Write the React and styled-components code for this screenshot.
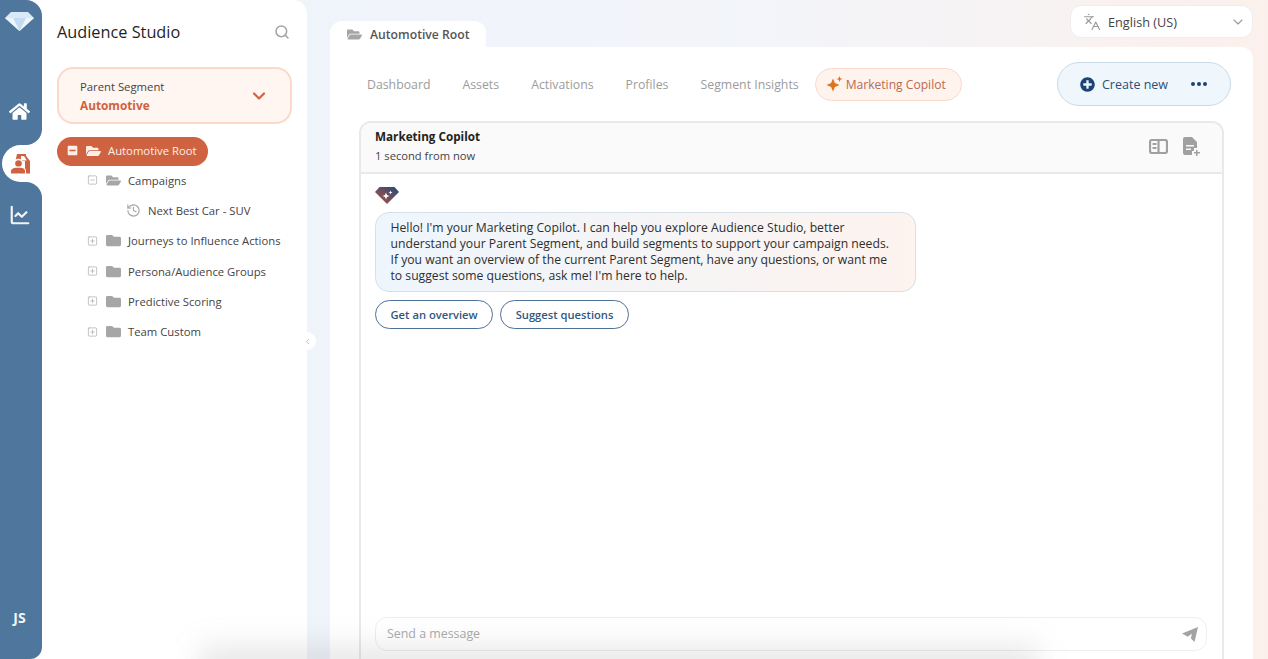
import React from 'react';
import styled, { createGlobalStyle } from 'styled-components';
import { FaFolder, FaFolderOpen, FaHome, FaMinusSquare, FaPlusCircle } from 'react-icons/fa';
import { ChevronDown, ChevronLeft, ChartLine, History, Languages, Search, SquareMinus, SquarePlus } from 'lucide-react';

const GlobalStyle = createGlobalStyle`
  html, body {
    margin: 0;
    height: 100%;
    overflow: hidden;
    background: #fff;
    font-family: "Open Sans", "Noto Sans", sans-serif;
  }
  #root { height: 100%; }
  * { box-sizing: border-box; }
`;

const Page = styled.div`
  position: relative;
  display: flex;
  height: 659px;
  overflow: hidden;
  background: linear-gradient(90deg, #edf2fb 0%, #f3f5fa 60%, #fbf0ec 100%);
`;

// left rail
const Rail = styled.nav`
  width: 42px;
  flex: none;
  display: flex;
  flex-direction: column;
  background: #fff;
`;

const RailTop = styled.div`
  height: 145px;
  background: #4f769c;
  border-radius: 0 16px 16px 0;
  display: flex;
  flex-direction: column;
  align-items: center;
  padding: 11px 3px 0 0;
  gap: 70px;
`;

const RailNotch = styled.div`
  height: 37px;
  background: #4f769c;
`;

const RailActive = styled.div`
  height: 100%;
  margin-left: 2px;
  padding-right: 4px;
  background: #fff;
  border-radius: 19px 0 0 19px;
  display: flex;
  align-items: center;
  justify-content: center;
  color: #cf6240;
`;

const RailBottom = styled.div`
  flex: 1;
  background: #4f769c;
  border-radius: 0 16px 12px 0;
  display: flex;
  flex-direction: column;
  align-items: center;
  justify-content: space-between;
  padding: 22px 3px 32px 0;
  color: #fff;
`;

const Initials = styled.span`
  font-size: 14px;
  font-weight: 700;
  color: #f3f6fa;
`;

// tree sidebar
const Sidebar = styled.aside`
  position: relative;
  width: 265px;
  flex: none;
  background: #fff;
  border-radius: 0 14px 0 0;
  padding: 21px 15px 0;
`;

const SideHead = styled.div`
  display: flex;
  align-items: center;
  justify-content: space-between;
  height: 22px;
  padding-right: 2px;
  color: #a5a5a5;
`;

const SideTitle = styled.h1`
  margin: 0;
  font-size: 16.3px;
  font-weight: 500;
  color: #1f1f1f;
`;

const SegmentBox = styled.div`
  display: flex;
  align-items: center;
  justify-content: space-between;
  height: 57px;
  margin-top: 24px;
  padding: 0 21px 0 21px;
  background: #fff5f1;
  border: 2px solid #fbd8ca;
  border-radius: 16px;
  color: #cf6240;
`;

const SegmentLabel = styled.div`
  font-size: 11.3px;
  line-height: 18px;
  color: #444;
`;

const SegmentValue = styled.div`
  font-size: 11.8px;
  line-height: 18px;
  font-weight: 700;
  color: #cf6240;
`;

const Tree = styled.div`
  display: flex;
  flex-direction: column;
  margin-top: 13px;
`;

const TreeRow = styled.div`
  display: flex;
  align-items: center;
  height: 30.3px;
  padding: 0 0 2px ${p => p.$indent}px;
  font-size: 11.3px;
  color: #444;
  white-space: nowrap;
`;

const RootRow = styled.div`
  display: flex;
  align-items: center;
  align-self: flex-start;
  width: 151px;
  height: 29px;
  padding: 0 0 2px 10px;
  background: #cf6240;
  border-radius: 15px;
  font-size: 11.3px;
  color: #fdeee8;
`;

const Toggle = styled.span`
  display: flex;
  width: 11px;
  margin-right: 8px;
  color: ${p => p.$color || '#a3a3a3'};
`;

const RowIcon = styled.span`
  display: flex;
  width: 15px;
  margin-right: 7px;
  color: ${p => p.$color || '#a6a6a6'};
`;

const CollapseTab = styled.button`
  position: absolute;
  top: 332px;
  right: -9px;
  width: 18px;
  height: 18px;
  padding: 0;
  display: flex;
  align-items: center;
  justify-content: center;
  background: #fff;
  border: 0;
  border-radius: 50%;
  color: #aaa;
`;

// right side
const Main = styled.main`
  flex: 1;
  min-width: 0;
  display: flex;
  flex-direction: column;
  padding: 0 15px 0 23px;
`;

const TopBar = styled.div`
  height: 47px;
  flex: none;
  display: flex;
  justify-content: space-between;
  align-items: flex-end;
`;

const FolderTab = styled.div`
  display: flex;
  align-items: center;
  gap: 8px;
  width: 156px;
  height: 26px;
  padding: 0 0 0 17px;
  background: #fff;
  border-radius: 12px 12px 0 0;
  font-size: 12.2px;
  font-weight: 600;
  color: #555;
`;

const LangSelect = styled.div`
  align-self: flex-start;
  display: flex;
  align-items: center;
  width: 183px;
  height: 33px;
  margin: 5px 0 0;
  padding: 0 6px 0 12px;
  background: #fff;
  border: 1px solid #eee;
  border-radius: 11px;
  font-size: 12.7px;
  color: #444;
`;

const LangText = styled.span`
  flex: 1;
  margin-left: 7px;
`;

const Panel = styled.section`
  flex: 1;
  min-height: 0;
  display: flex;
  flex-direction: column;
  background: #fff;
  border-radius: 0 12px 0 0;
  padding: 15px 29px 0 30px;
`;

const NavRow = styled.div`
  display: flex;
  align-items: center;
  justify-content: space-between;
  height: 44px;
  flex: none;
  margin-right: -7px;
`;

const NavTabs = styled.div`
  display: flex;
  align-items: center;
  gap: 32px;
  padding-left: 7px;
`;

const NavTab = styled.span`
  font-size: 12.3px;
  color: #9c9c9c;
`;

const CopilotTab = styled.span`
  display: flex;
  align-items: center;
  gap: 3px;
  height: 33px;
  margin-left: -16px;
  padding: 0 15px 0 10px;
  background: #fff3ee;
  border: 1.5px solid #fbd8ca;
  border-radius: 17px;
  font-size: 12.1px;
  color: #b96a52;
`;

const CreateButton = styled.div`
  display: flex;
  align-items: center;
  width: 174px;
  height: 44px;
  padding-left: 22px;
  background: #eff6fc;
  border: 1.5px solid #c9dbe9;
  border-radius: 22px;
  font-size: 12.5px;
  color: #2c5078;
`;

const CreateLabel = styled.span`
  margin-left: 7px;
  flex: 1;
`;

const Dots = styled.span`
  display: flex;
  gap: 2px;
  margin-right: 23px;
`;

const Dot = styled.i`
  width: 4px;
  height: 4px;
  border-radius: 50%;
  background: #1d4374;
`;

const ChatCard = styled.div`
  flex: 1;
  min-height: 0;
  display: flex;
  flex-direction: column;
  margin: 15px 0 0 -1px;
  border: 2px solid #e9e9e9;
  border-bottom: 0;
  border-radius: 12px 12px 0 0;
`;

const ChatHead = styled.header`
  display: flex;
  align-items: center;
  justify-content: space-between;
  height: 51px;
  flex: none;
  padding: 0 22px 3px 14px;
  background: #fafafa;
  border-bottom: 2px solid #e9e9e9;
  border-radius: 10px 10px 0 0;
`;

const ChatTitle = styled.div`
  font-size: 11.7px;
  line-height: 19px;
  font-weight: 700;
  color: #222;
`;

const ChatTime = styled.div`
  font-size: 11.2px;
  line-height: 19px;
  color: #444;
`;

const HeadIcons = styled.div`
  display: flex;
  align-items: center;
  gap: 15px;
  color: #a0a0a0;
`;

const ChatBody = styled.div`
  flex: 1;
  min-height: 0;
  display: flex;
  flex-direction: column;
  align-items: flex-start;
  padding: 13px 15px 8px 14px;
`;

const Bubble = styled.div`
  width: 541px;
  height: 80px;
  margin-top: 8px;
  padding: 7px 14.500px;
  background: linear-gradient(90deg, #eef6fd 0%, #fdf3ef 100%);
  border: 1.5px solid #d6e0e8;
  border-radius: 14px;
  font-size: 12.2px;
  line-height: 16px;
  color: #2e2e2e;
  white-space: nowrap;
`;

const Actions = styled.div`
  display: flex;
  gap: 7px;
  margin-top: 8px;
`;

const ActionButton = styled.button`
  height: 29px;
  padding: 0 14.500px;
  background: #fff;
  border: 1.5px solid #4d7199;
  border-radius: 15px;
  font-family: inherit;
  font-size: 11.2px;
  font-weight: 600;
  color: #31577f;
`;

const InputBar = styled.div`
  display: flex;
  align-items: center;
  justify-content: space-between;
  width: 100%;
  height: 34px;
  margin-top: auto;
  padding: 0 8px 0 11px;
  border: 1.5px solid #eee;
  border-radius: 12px;
  background: #fff;
`;

const Placeholder = styled.span`
  margin-top: -2px;
  font-size: 12.4px;
  color: #aaa;
`;

const BottomFade = styled.div`
  position: absolute;
  left: 200px;
  right: 230px;
  bottom: -28px;
  height: 42px;
  background: rgba(120, 120, 120, 0.16);
  filter: blur(14px);
  pointer-events: none;
`;

const Diamond = () => (
  <svg width="29" height="20" viewBox="0 0 29 20">
    <path d="M6 1h17l6 6-14.500 13L0 7z" fill="#d9e9f8" />
    <path d="M0 7h29L14.500 20z" fill="#eef6fd" />
    <path d="M8 7h13l-6.500 13z" fill="#c4dcf2" />
  </svg>
);

const CopilotMark = () => (
  <svg width="24" height="17" viewBox="0 0 24 17">
    <defs>
      <linearGradient id="mark" x1="0" x2="1" y1="1" y2="0">
        <stop offset="0" stopColor="#b5533f" />
        <stop offset="1" stopColor="#23487c" />
      </linearGradient>
    </defs>
    <path d="M4.500 0h15L24 5 12 17 0 5z" fill="url(#mark)" />
    <path d="M11 5.500l1 2.500 2.500 1-2.500 1-1 2.500-1-2.500-2.500-1 2.500-1zM15.500 3.500l.6 1.400 1.400.6-1.400.6-.6 1.400-.6-1.400-1.400-.6 1.400-.6z" fill="#fff" />
  </svg>
);

const PersonCar = () => (
  <svg width="19" height="20" viewBox="0 0 19 20" fill="currentColor">
    <path d="M6 0h7.500L19 7v12.500h-5V0z" />
    <path d="M6 0h9v7H4.500z" />
    <path d="M10 2h3l2.800 4.500H10z" fill="#fff" />
    <circle cx="7.500" cy="9.500" r="4.800" fill="#fff" />
    <circle cx="7.500" cy="9.500" r="3.300" />
    <path d="M-1 20.500v-3.500c0-2.600 3-4.300 6.500-4.300h4c3.600 0 5.500 1.700 5.500 4.300v3.500z" fill="#fff" />
    <path d="M0 19.500v-2.500c0-2 2.600-3.300 5.500-3.300h4c2.900 0 4.500 1.300 4.500 3.300v2.500z" />
  </svg>
);

const Sparkle = () => (
  <svg width="17" height="17" viewBox="0 0 17 17" fill="#dd7420">
    <path d="M7 2.500l1.900 4.600L13.500 9l-4.600 1.900L7 15.500l-1.900-4.600L.5 9l4.600-1.900z" />
    <path d="M13.500 0l.8 2.200 2.200.8-2.200.8-.8 2.200-.8-2.200-2.200-.8 2.200-.8z" />
  </svg>
);

const PanelIcon = () => (
  <svg width="19" height="15" viewBox="0 0 19 15" fill="none" stroke="currentColor" strokeWidth="2.2">
    <rect x="1" y="1" width="17" height="13" rx="2" />
    <path d="M9.500 1v13M3.500 5h4M3.500 9h4" />
  </svg>
);

const NoteIcon = () => (
  <svg width="17" height="19" viewBox="0 0 17 19" fill="currentColor">
    <path d="M2 0h7l5 5v6h-3v3H9v4H2a2 2 0 0 1-2-2V2a2 2 0 0 1 2-2z" />
    <path d="M3 8h8v1.500H3zM3 11.500h5V13H3z" fill="#fafafa" />
    <path d="M13 13h1.500v2H17v1.500h-2.500V19H13v-2.500h-2V15h2z" />
  </svg>
);

const SendIcon = () => (
  <svg width="16" height="15" viewBox="0 0 16 15" fill="#a3a3a3">
    <path d="M16 0L12.500 15 8.800 11.200 10 6.500 5.800 9.700 0 6.500z" />
  </svg>
);

const navItems = ['Dashboard', 'Assets', 'Activations', 'Profiles', 'Segment Insights'];
const closedFolders = ['Journeys to Influence Actions', 'Persona/Audience Groups', 'Predictive Scoring', 'Team Custom'];

const App = () => {
  return (
    <>
      <GlobalStyle />
      <Page>
        <Rail>
          <RailTop>
            <Diamond />
            <FaHome size={21} color="#fff" />
          </RailTop>
          <RailNotch>
            <RailActive>
              <PersonCar />
            </RailActive>
          </RailNotch>
          <RailBottom>
            <ChartLine size={22} strokeWidth={2.4} color="#f0f4f8" />
            <Initials>JS</Initials>
          </RailBottom>
        </Rail>

        <Sidebar>
          <SideHead>
            <SideTitle>Audience Studio</SideTitle>
            <Search size={16} strokeWidth={2.3} />
          </SideHead>
          <SegmentBox>
            <div>
              <SegmentLabel>Parent Segment</SegmentLabel>
              <SegmentValue>Automotive</SegmentValue>
            </div>
            <ChevronDown size={20} strokeWidth={2.6} />
          </SegmentBox>
          <Tree>
            <RootRow>
              <Toggle $color="#fdeee8"><FaMinusSquare size={11} /></Toggle>
              <RowIcon $color="#fdeee8"><FaFolderOpen size={16} /></RowIcon>
              Automotive Root
            </RootRow>
            <TreeRow $indent={30}>
              <Toggle><SquareMinus size={12} strokeWidth={1.4} /></Toggle>
              <RowIcon><FaFolderOpen size={15} /></RowIcon>
              Campaigns
            </TreeRow>
            <TreeRow $indent={69}>
              <RowIcon><History size={15} strokeWidth={1.8} /></RowIcon>
              Next Best Car - SUV
            </TreeRow>
            {closedFolders.map(name => (
              <TreeRow key={name} $indent={30}>
                <Toggle><SquarePlus size={12} strokeWidth={1.4} /></Toggle>
                <RowIcon><FaFolder size={15} /></RowIcon>
                {name}
              </TreeRow>
            ))}
          </Tree>
          <CollapseTab><ChevronLeft size={9} strokeWidth={2} /></CollapseTab>
        </Sidebar>

        <Main>
          <TopBar>
            <FolderTab>
              <FaFolderOpen size={15} color="#a6a6a6" />
              Automotive Root
            </FolderTab>
            <LangSelect>
              <Languages size={18} strokeWidth={1.5} color="#999" />
              <LangText>English (US)</LangText>
              <ChevronDown size={16} strokeWidth={1.6} color="#999" />
            </LangSelect>
          </TopBar>
          <Panel>
            <NavRow>
              <NavTabs>
                {navItems.map(item => <NavTab key={item}>{item}</NavTab>)}
                <CopilotTab><Sparkle />Marketing Copilot</CopilotTab>
              </NavTabs>
              <CreateButton>
                <FaPlusCircle size={15} color="#1d4374" />
                <CreateLabel>Create new</CreateLabel>
                <Dots><Dot /><Dot /><Dot /></Dots>
              </CreateButton>
            </NavRow>
            <ChatCard>
              <ChatHead>
                <div>
                  <ChatTitle>Marketing Copilot</ChatTitle>
                  <ChatTime>1 second from now</ChatTime>
                </div>
                <HeadIcons>
                  <PanelIcon />
                  <NoteIcon />
                </HeadIcons>
              </ChatHead>
              <ChatBody>
                <CopilotMark />
                <Bubble>
                  Hello! I'm your Marketing Copilot. I can help you explore Audience Studio, better<br />
                  understand your Parent Segment, and build segments to support your campaign needs.<br />
                  If you want an overview of the current Parent Segment, have any questions, or want me<br />
                  to suggest some questions, ask me! I'm here to help.
                </Bubble>
                <Actions>
                  <ActionButton>Get an overview</ActionButton>
                  <ActionButton>Suggest questions</ActionButton>
                </Actions>
                <InputBar>
                  <Placeholder>Send a message</Placeholder>
                  <SendIcon />
                </InputBar>
              </ChatBody>
            </ChatCard>
          </Panel>
        </Main>
        <BottomFade />
      </Page>
    </>
  );
};

export default App;
